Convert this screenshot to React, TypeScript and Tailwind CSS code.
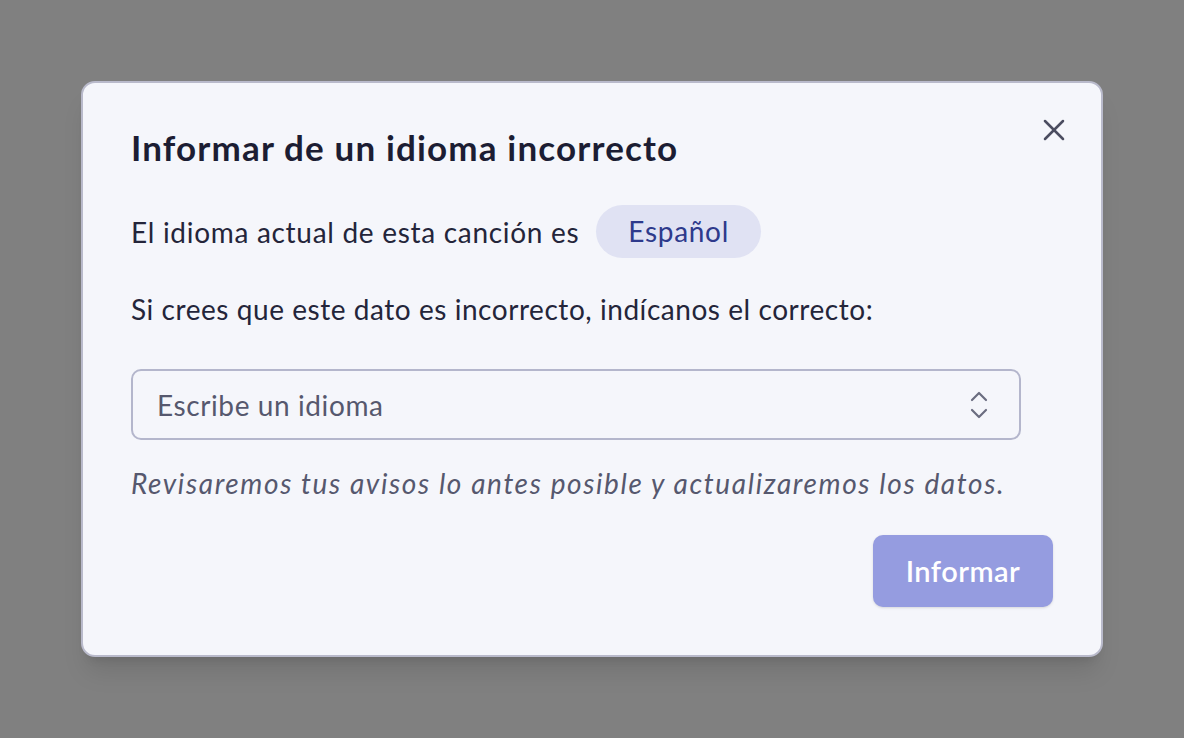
import { X } from "lucide-react";

const font = { fontFamily: "Lato, 'Noto Sans', sans-serif" };

const UpDown = () => (
  <svg width="18" height="28" viewBox="0 0 18 28" fill="none" stroke="#6b6d80" strokeWidth="2.2" strokeLinecap="round" strokeLinejoin="round">
    <path d="M2 9 L9 2 L16 9" />
    <path d="M2 19 L9 26 L16 19" />
  </svg>
);

const App = () => {
  return (
    <div className="flex h-screen w-full items-center justify-center bg-[#808080]" style={font}>
      <div className="relative flex w-[1022px] h-[576px] flex-col rounded-[14px] border-2 border-[#b9bacb] bg-[#f5f6fb] px-[48px] pt-[42px] pb-[48px] shadow-xl">
        <button className="absolute right-[29px] top-[29px] text-[#4b4d60]">
          <X className="h-[36px] w-[36px]" strokeWidth={1.7} />
        </button>

        <h2 className="text-[35px] font-bold leading-[44px] tracking-[1.15px] text-[#1c1d33]">
          Informar de un idioma incorrecto
        </h2>

        <div className="mt-[36px] flex items-center gap-[17px] text-[28px] tracking-[0.7px] text-[#24253a]">
          <span>El idioma actual de esta canción es</span>
          <span className="rounded-full bg-[#e0e2f3] px-[32px] py-[8px] leading-[37px] text-[#2e3a8c]">
            Español
          </span>
        </div>

        <p className="mt-[33px] text-[28px] leading-[36px] tracking-[0.55px] text-[#24253a]">
          Si crees que este dato es incorrecto, indícanos el correcto:
        </p>

        <div className="mt-[42px] flex h-[71px] w-[890px] items-center justify-between rounded-[10px] border-2 border-[#b4b6cc] pl-[24px] pr-[31px]">
          <input
            className="flex-1 bg-transparent text-[28px] tracking-[0.6px] text-[#24253a] outline-none placeholder:text-[#56586e]"
            placeholder="Escribe un idioma"
          />
          <UpDown />
        </div>

        <p className="mt-[25px] text-[28px] italic leading-[36px] tracking-[1.62px] text-[#56586e]">
          Revisaremos tus avisos lo antes posible y actualizaremos los datos.
        </p>

        <div className="mt-auto flex justify-end">
          <button className="h-[72px] w-[180px] rounded-[10px] bg-[#959ce0] text-[29px] font-semibold tracking-[0.5px] text-white shadow-sm">
            Informar
          </button>
        </div>
      </div>
    </div>
  );
};

export default App;
